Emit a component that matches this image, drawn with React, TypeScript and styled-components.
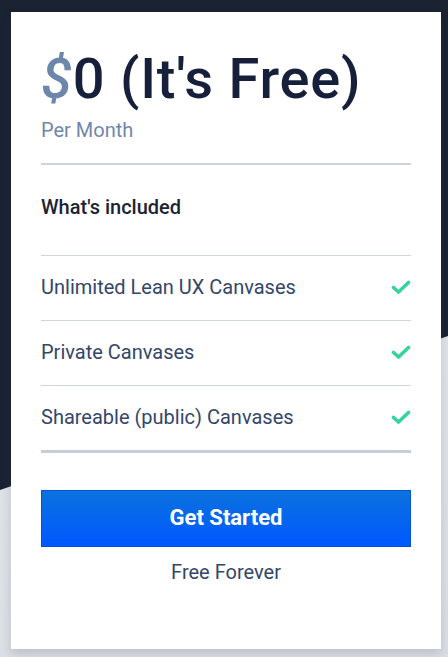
import styled, { createGlobalStyle } from 'styled-components'

const GlobalStyle = createGlobalStyle`
  html, body {
    margin: 0;
    padding: 0;
  }

  body {
    font-family: Roboto, 'Liberation Sans', sans-serif;
    background: #e3e5e9;
  }
`

const Page = styled.main`
  position: relative;
  min-height: 657px;
  box-sizing: border-box;
  padding: 12px 7px 8px 11px;
  background: linear-gradient(180deg, #e8eaee 0%, #dcdfe4 100%);

  &::before {
    content: '';
    position: absolute;
    inset: 0;
    background: #1b2333;
    clip-path: polygon(0 0, 100% 0, 100% 336px, 0 490px);
  }
`

const Card = styled.article`
  position: relative;
  box-sizing: border-box;
  width: 430px;
  height: 637px;
  padding: 36px 30px 0;
  background: #fff;
  box-shadow: 0 5px 10px rgba(40, 50, 70, 0.18);
  display: flex;
  flex-direction: column;
`

const Price = styled.h1`
  margin: 0;
  font-size: 56px;
  line-height: 62px;
  font-weight: 500;
  color: #17203a;
  letter-spacing: 0.8px;
  white-space: nowrap;
`

const Currency = styled.span`
  color: #6d86ab;
  font-style: italic;
  font-weight: 500;
`

const Period = styled.p`
  margin: 8px 0 0;
  font-size: 20px;
  line-height: 24px;
  color: #6f87ab;
`

const Rule = styled.hr<{ $thick?: boolean }>`
  margin: 0;
  border: 0;
  height: ${(p) => (p.$thick ? 3 : 2)}px;
  background: ${(p) => (p.$thick ? '#c6cdda' : '#ccd4e2')};
`

const TopRule = styled(Rule)`
  margin-top: 21px;
`

const Heading = styled.h2`
  margin: 30px 0 36px;
  font-size: 20px;
  line-height: 24px;
  font-weight: 500;
  color: #1b2333;
`

const Features = styled.ul`
  margin: 0;
  padding: 0;
  list-style: none;
`

const Feature = styled.li`
  display: flex;
  align-items: center;
  justify-content: space-between;
  height: 62px;
  padding-bottom: 2px;
  border-top: 1px solid #cfd6e2;
  font-size: 20px;
  color: #33466a;
`

const Check = styled.svg`
  width: 20px;
  height: 15px;
  flex: none;
`

const StartButton = styled.button`
  margin-top: 37px;
  height: 57px;
  border: 1px solid #0052d6;
  background: linear-gradient(180deg, #0b72dd 0%, #0058ff 100%);
  color: #fff;
  font-family: Roboto, 'Liberation Sans', sans-serif;
  font-size: 22px;
  font-weight: 700;
  padding-bottom: 3px;
  cursor: pointer;
`

const Note = styled.p`
  margin: 13px 0 0;
  text-align: center;
  font-size: 20px;
  line-height: 24px;
  color: #33466a;
`

const features = [
  'Unlimited Lean UX Canvases',
  'Private Canvases',
  'Shareable (public) Canvases',
]

const CheckIcon = () => (
  <Check viewBox="0 0 20 15">
    <path
      d="M2.5 7.5 L7.5 12 L17.5 2.5"
      fill="none"
      stroke="#36d2a0"
      strokeWidth="3.6"
      strokeLinecap="round"
      strokeLinejoin="round"
    />
  </Check>
)

const App: React.FC = () => (
  <>
    <GlobalStyle />
    <Page>
      <Card>
        <Price>
          <Currency>$</Currency>0 (It's Free)
        </Price>
        <Period>Per Month</Period>
        <TopRule />
        <Heading>What's included</Heading>
        <Features>
          {features.map((f) => (
            <Feature key={f}>
              {f}
              <CheckIcon />
            </Feature>
          ))}
        </Features>
        <Rule $thick />
        <StartButton>Get Started</StartButton>
        <Note>Free Forever</Note>
      </Card>
    </Page>
  </>
)

export { App as default }
